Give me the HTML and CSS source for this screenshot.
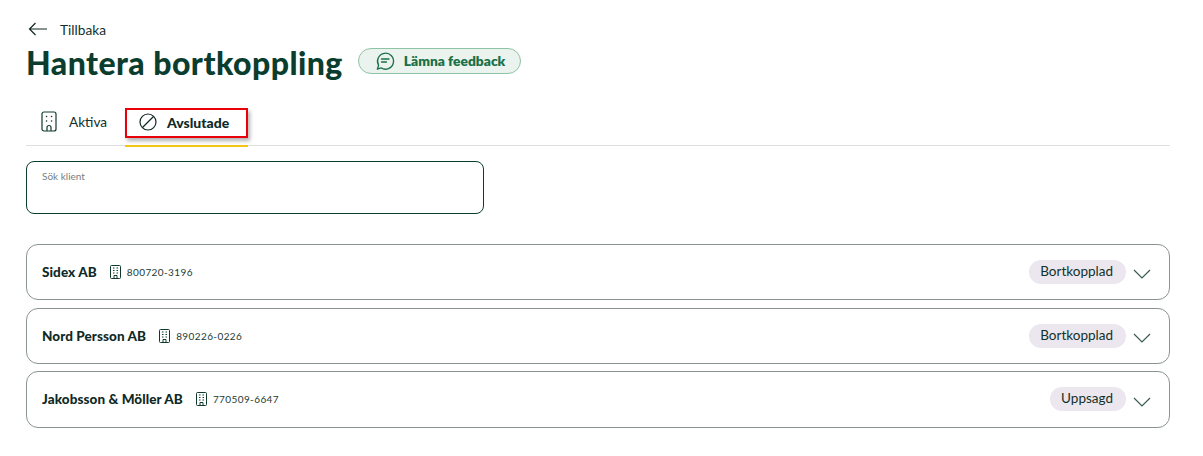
FILE: index.html
```html
<!DOCTYPE html>
<html lang="sv">
<head>
<meta charset="utf-8">
<title>Hantera bortkoppling</title>
<link rel="stylesheet" href="styles.css">
</head>
<body>
<main class="page">
  <a class="back">
    <svg class="back-icon" width="20" height="14" viewBox="0 0 20 14" fill="none"><path d="M19 7H1.500M7.500 1 1.500 7l6 6" stroke="#12261f" stroke-width="1.200"/></svg>
    <span>Tillbaka</span>
  </a>
  <div class="head">
    <h1 class="title">Hantera bortkoppling</h1>
    <button class="feedback">
      <svg width="20" height="20" viewBox="0 0 20 20" fill="none" stroke="#1a7048" stroke-width="1.300"><path d="M2.300 18.200 3.600 14.200A8 8 0 1 1 6 16.800Z" stroke-linejoin="round"/><path d="M6.500 8h7.500M6.500 11h5" stroke-linecap="round"/></svg>
      <span>Lämna feedback</span>
    </button>
  </div>
  <nav class="tabs">
    <div class="tab">
      <svg width="16" height="21" viewBox="0 0 16 21" fill="none" stroke="#0f3a2d" stroke-width="1.200"><rect x="1" y="1" width="14" height="19" rx="2"/><path d="M6 20v-3.500a2 2 0 0 1 4 0V20"/><path d="M5.500 5.500h.1M10.500 5.500h.1M5.500 10h.1M10.500 10h.1" stroke-width="1.500" stroke-linecap="round"/></svg>
      <span>Aktiva</span>
    </div>
    <div class="tab-active">
      <div class="tab-mark">
        <svg width="18" height="18" viewBox="0 0 18 18" fill="none" stroke="#0f2a26" stroke-width="1.200"><circle cx="9" cy="9" r="8"/><path d="M3.500 14.500 14.500 3.500"/></svg>
        <span>Avslutade</span>
      </div>
    </div>
  </nav>
  <div class="search"><label class="search-label">Sök klient</label></div>
  <section class="list">
    <article class="card">
      <strong class="name">Sidex AB</strong>
      <svg class="org-icon" width="11" height="14" viewBox="0 0 11 14" fill="none" stroke="#0f3a2d"><rect x=".5" y=".5" width="10" height="13" rx="1"/><path d="M4 13.500V10.500h3v3"/><path d="M3 3h1.500M6.500 3h1.500M3 5.500h1.500M6.500 5.500h1.500M3 8h1.500M6.500 8h1.500"/></svg>
      <span class="org">800720-3196</span>
      <span class="badge">Bortkopplad</span>
      <svg class="chev" width="18" height="10" viewBox="0 0 18 10" fill="none"><path d="M1 1l8 8 8-8" stroke="#3c5a50" stroke-width="1.200"/></svg>
    </article>
    <article class="card">
      <strong class="name">Nord Persson AB</strong>
      <svg class="org-icon" width="11" height="14" viewBox="0 0 11 14" fill="none" stroke="#0f3a2d"><rect x=".5" y=".5" width="10" height="13" rx="1"/><path d="M4 13.500V10.500h3v3"/><path d="M3 3h1.500M6.500 3h1.500M3 5.500h1.500M6.500 5.500h1.500M3 8h1.500M6.500 8h1.500"/></svg>
      <span class="org">890226-0226</span>
      <span class="badge">Bortkopplad</span>
      <svg class="chev" width="18" height="10" viewBox="0 0 18 10" fill="none"><path d="M1 1l8 8 8-8" stroke="#3c5a50" stroke-width="1.200"/></svg>
    </article>
    <article class="card card-tall">
      <strong class="name">Jakobsson &amp; Möller AB</strong>
      <svg class="org-icon" width="11" height="14" viewBox="0 0 11 14" fill="none" stroke="#0f3a2d"><rect x=".5" y=".5" width="10" height="13" rx="1"/><path d="M4 13.500V10.500h3v3"/><path d="M3 3h1.500M6.500 3h1.500M3 5.500h1.500M6.500 5.500h1.500M3 8h1.500M6.500 8h1.500"/></svg>
      <span class="org">770509-6647</span>
      <span class="badge">Uppsagd</span>
      <svg class="chev" width="18" height="10" viewBox="0 0 18 10" fill="none"><path d="M1 1l8 8 8-8" stroke="#3c5a50" stroke-width="1.200"/></svg>
    </article>
  </section>
</main>
</body>
</html>
```
FILE: styles.css
```css
* { box-sizing: border-box; }
html, body { margin: 0; background: #fff; }
body { font-family: "Lato", "Noto Sans", sans-serif; color: #0f2a26; }
.page { padding: 20px 33px 0 26px; height: 456px; overflow: hidden; }
.back { display: flex; align-items: center; gap: 12px; height: 18px; padding-left: 2px; font-size: 13.700px; color: #12302a; }
.head { display: flex; align-items: flex-start; gap: 15px; margin-top: 6px; height: 37px; }
.title { margin: 0; font-size: 32px; line-height: 37px; font-weight: 900; color: #0b3d2e; letter-spacing: .45px; }
.feedback { display: flex; align-items: center; gap: 9px; height: 26px; width: 163px; margin-top: 4px; padding: 0 0 1px 16px; border: 1px solid #8fc3a6; border-radius: 13px; background: #eaf3ee; font: 800 13.800px "Lato", sans-serif; color: #1a7048; }
.tabs { display: flex; height: 38px; margin-top: 27px; border-bottom: 1px solid #dfdfdf; align-items: flex-start; }
.tab { display: flex; align-items: center; gap: 12px; width: 99px; height: 37px; padding: 0 0 10px 15px; font-size: 13.600px; color: #12302a; }
.tab-active { width: 123px; height: 39px; border-bottom: 2px solid #f5c518; }
.tab-mark { display: flex; align-items: center; gap: 9px; height: 30px; padding: 0 0 2px 12px; border: 2px solid #e8000b; box-shadow: 2px 3px 4px rgba(0,0,0,.3); font-size: 14px; font-weight: 900; color: #0f2a26; }
.tab-mark svg { margin-right: 1px; }
.search { width: 458px; height: 53px; margin-top: 15px; border: 1px solid #0b3d2e; border-radius: 8px; padding: 8px 15px; }
.search-label { display: block; font-size: 10px; line-height: 12px; color: #78807d; }
.list { display: flex; flex-direction: column; gap: 8px; margin-top: 30px; }
.card { display: flex; align-items: center; height: 56px; padding: 0 18px 1px 15px; border: 1px solid #8a9490; border-radius: 12px; }
.card-tall { height: 57px; margin-top: -1px; }
.name { font-size: 13.500px; font-weight: 900; letter-spacing: .08px; color: #0f2a26; }
.org-icon { margin-left: 13px; }
.org { margin-left: 6px; font-size: 10px; letter-spacing: .4px; color: #1d3a33; }
.badge { margin-left: auto; height: 24px; padding: 0 13px 0 11px; border-radius: 12px; background: #ece7ee; font-size: 13.500px; line-height: 22px; color: #12302a; }
.chev { margin-left: 7px; margin-top: 5px; }
```
